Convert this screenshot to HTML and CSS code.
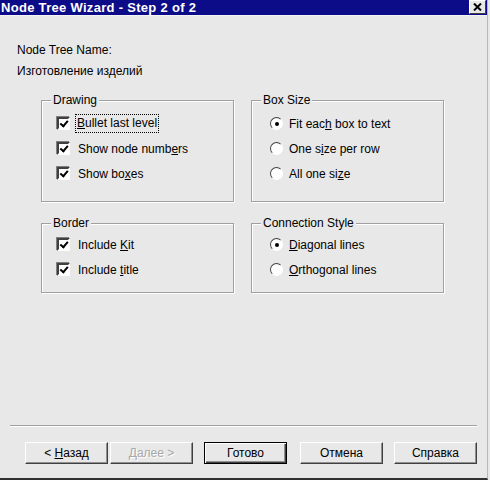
FILE: index.html
```html
<!DOCTYPE html>
<html lang="ru">
<head>
  <meta charset="UTF-8" />
  <title>Node Tree Wizard - Step 2 of 2</title>
  <link rel="stylesheet" href="styles.css">
</head>
<body>
  <div class="window">
    <div class="titlebar">
      <span class="title">Node Tree Wizard - Step 2 of 2</span>
      <span class="close">
        <svg width="9" height="8" viewBox="0 0 9 8"><path d="M1 0.5 L8 7.5 M8 0.5 L1 7.5" stroke="#000" stroke-width="2"/></svg>
      </span>
    </div>

    <div class="content">
      <div class="label">Node Tree Name:</div>
      <div class="label">Изготовление изделий</div>

      <div class="groups">
        <fieldset class="group">
          <legend>Drawing</legend>
          <div class="row"><span class="check on"></span><span class="focus"><u>B</u>ullet last level</span></div>
          <div class="row"><span class="check on"></span><span>Show node numb<u>e</u>rs</span></div>
          <div class="row"><span class="check on"></span><span>Show bo<u>x</u>es</span></div>
        </fieldset>

        <fieldset class="group">
          <legend>Box Size</legend>
          <div class="row"><span class="radio on"></span><span>Fit eac<u>h</u> box to text</span></div>
          <div class="row"><span class="radio"></span><span>One s<u>i</u>ze per row</span></div>
          <div class="row"><span class="radio"></span><span>All one si<u>z</u>e</span></div>
        </fieldset>

        <fieldset class="group small">
          <legend>Border</legend>
          <div class="row"><span class="check on"></span><span>Include <u>K</u>it</span></div>
          <div class="row"><span class="check on"></span><span>Include <u>t</u>itle</span></div>
        </fieldset>

        <fieldset class="group small">
          <legend>Connection Style</legend>
          <div class="row"><span class="radio on"></span><span><u>D</u>iagonal lines</span></div>
          <div class="row"><span class="radio"></span><span><u>O</u>rthogonal lines</span></div>
        </fieldset>
      </div>

      <div class="footer">
        <div class="separator"></div>
        <div class="buttons">
          <button class="btn">&lt; <u>Н</u>азад</button>
          <button class="btn disabled">Далее &gt;</button>
          <button class="btn default">Готово</button>
          <button class="btn">Отмена</button>
          <button class="btn">Справка</button>
        </div>
      </div>
    </div>
  </div>
</body>
</html>
```

FILE: styles.css
```css
body {
  margin: 0;
  background: #e8e8e8;
  font-family: "Liberation Sans", Arial, sans-serif;
  font-size: 12px;
  color: #000;
}

.window {
  width: 488px;
  height: 480px;
  box-sizing: border-box;
  border-right: 1px solid #b8b8b8;
  border-bottom: 2px solid #303030;
  display: flex;
  flex-direction: column;
}

.titlebar {
  height: 15px;
  background: #0c0c88;
  border-bottom: 1px solid #f4f4f4;
  display: flex;
  align-items: center;
  justify-content: space-between;
  padding: 0 1px 0 1px;
}

.title {
  color: #fff;
  font-weight: bold;
  font-size: 13px;
  letter-spacing: 0.3px;
  line-height: 15px;
}

.close {
  width: 15px;
  height: 12px;
  margin-top: -2px;
  background: #e8e8e8;
  border: 1px solid;
  border-color: #fff #404040 #404040 #fff;
  display: flex;
  align-items: center;
  justify-content: center;
}

.content {
  flex: 1;
  display: flex;
  flex-direction: column;
  padding-left: 17px;
}

.label {
  line-height: 15px;
  margin-top: 6px;
}

.label:first-child {
  margin-top: 27px;
}

.groups {
  display: grid;
  grid-template-columns: 193px 193px;
  column-gap: 17px;
  row-gap: 14px;
  margin: 14px 0 0 24px;
}

.group {
  margin: 0;
  padding: 3px 0 15px 14px;
  border: 1px solid #a0a0a0;
  box-shadow: inset 1px 1px 0 #fff, 1px 1px 0 #fff;
}

.group.small {
  padding-top: 1px;
  padding-bottom: 10px;
}

.group legend {
  padding: 0 2px;
  margin-left: -5px;
  line-height: 15px;
  background: #e8e8e8;
}

.row {
  height: 25px;
  display: flex;
  align-items: center;
}

.check {
  width: 9px;
  height: 9px;
  background: #fff;
  border: 2px solid;
  border-color: #404040 #fff #fff #404040;
  box-shadow: -1px -1px 0 #808080;
  margin: 0 8px 0 1px;
  position: relative;
}

.check.on::after {
  content: "";
  position: absolute;
  left: 1px;
  top: 0;
  width: 6px;
  height: 3px;
  border-left: 2px solid #000;
  border-bottom: 2px solid #000;
  transform: rotate(-50deg) translate(-1px, 1px);
}

.radio {
  width: 11px;
  height: 11px;
  border-radius: 50%;
  background: #fff;
  border: 1px solid;
  border-color: #404040 #fff #fff #404040;
  margin: 0 6px 0 4px;
  display: flex;
  align-items: center;
  justify-content: center;
}

.radio.on::after {
  content: "";
  width: 4px;
  height: 4px;
  border-radius: 50%;
  background: #000;
}

.focus {
  outline: 1px dotted #000;
  padding: 1px 1px 2px;
  margin-left: -2px;
}

.footer {
  margin-top: auto;
  margin-left: -7px;
  width: 467px;
  padding-bottom: 14px;
}

.separator {
  border-top: 1px solid #a0a0a0;
  border-bottom: 1px solid #fff;
  margin-bottom: 15px;
}

.buttons {
  display: flex;
  margin-left: 15px;
}

.btn {
  flex-shrink: 0;
  width: 83px;
  height: 22px;
  margin-right: 11px;
  background: #e8e8e8;
  border: 1px solid;
  border-color: #fff #404040 #404040 #fff;
  box-shadow: inset -1px -1px 0 #909090;
  font-family: "Liberation Sans", Arial, sans-serif;
  font-size: 12px;
  color: #000;
  padding: 0;
}

.btn:first-child {
  margin-right: 2px;
}

.btn:last-child {
  margin-right: 0;
}

.btn.default {
  border: 1px solid #000;
  box-shadow: inset 1px 1px 0 #fff, inset -1px -1px 0 #404040, inset -2px -2px 0 #909090;
  margin-right: 13px;
}

.btn.disabled {
  color: #a8a8a8;
  text-shadow: 1px 1px 0 #fff;
}

u {
  text-underline-offset: 1px;
}
```
